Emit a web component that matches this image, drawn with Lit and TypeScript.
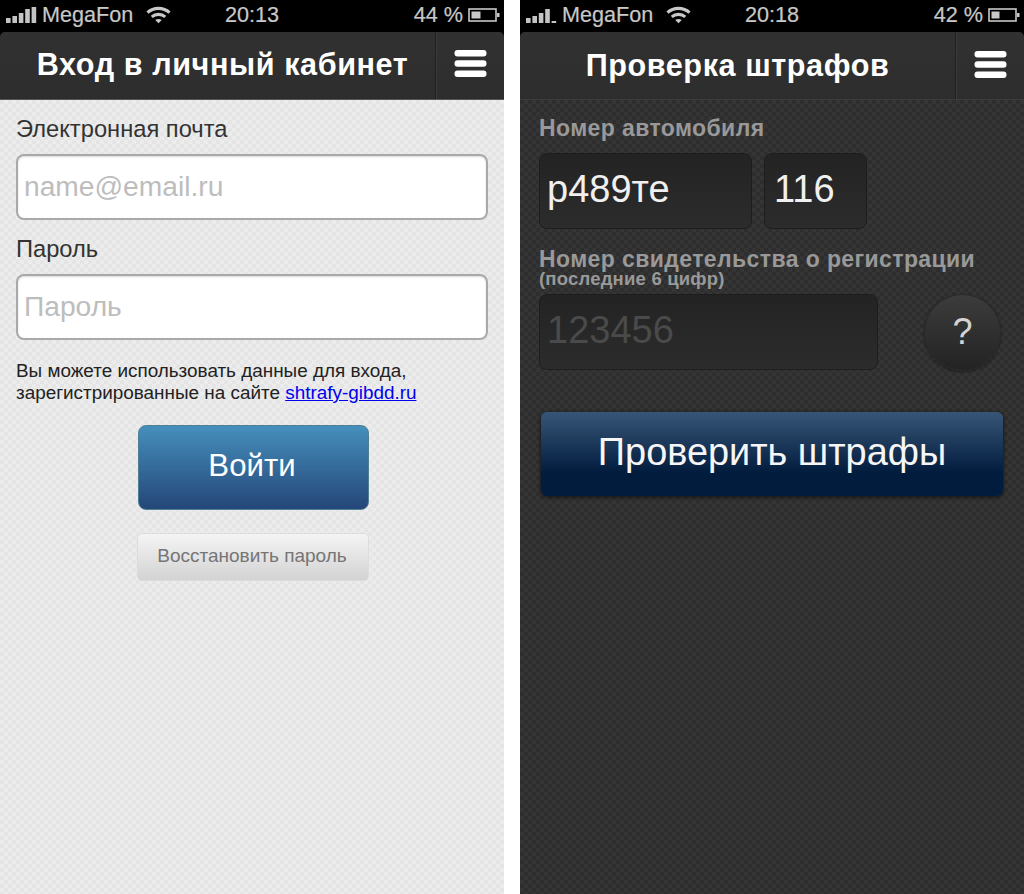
import { LitElement, html, css, svg } from "lit";
import { customElement } from "lit/decorators.js";

const signal = (bars: number[]) => html`<svg class="sig" width="31" height="18" viewBox="0 0 31 18">
  ${bars.map((h, i) => svg`<rect x="${i * 6.4}" y="${17 - h}" width="4.6" height="${h}" fill="#c4c4c4"/>`)}
</svg>`;

const wifi = html`<svg class="wifi" width="25" height="18" viewBox="0 0 26 18" fill="none" stroke="#c8c8c8" stroke-width="3.2">
  <path d="M1.5 6.5C8 .6 18 .6 24.5 6.5"/>
  <path d="M6 11C10 7.5 16 7.5 20 11"/>
  <path d="M13 17.5L9.6 14.2C11.6 12.7 14.4 12.7 16.4 14.2Z" fill="#c8c8c8" stroke="none"/>
</svg>`;

const battery = (fill: number) => html`<svg class="bat" width="33" height="16" viewBox="0 0 33 16">
  <rect x="1" y="2" width="27" height="12" fill="none" stroke="#c8c8c8" stroke-width="1.6"/>
  <rect x="3.5" y="4.5" width="${fill}" height="7" fill="#c8c8c8"/>
  <rect x="29" y="6" width="2.5" height="4" fill="#c8c8c8"/>
</svg>`;

const burger = html`<svg width="33" height="29" viewBox="0 0 33 29" fill="#fff">
  <rect x="0.5" y="1" width="32" height="6.5" rx="3"/>
  <rect x="0.5" y="11.2" width="32" height="6.5" rx="3"/>
  <rect x="0.5" y="21.4" width="32" height="6.5" rx="3"/>
</svg>`;

@customElement("app-root")
export class AppRoot extends LitElement {
  static styles = css`
    :host {
      display: flex;
      width: 1024px;
      height: 894px;
      overflow: hidden;
      background: #fff;
      font-family: "Liberation Sans", Arial, sans-serif;
    }
    .phone {
      width: 504px;
      height: 894px;
      flex: none;
      display: flex;
      flex-direction: column;
      background: #000;
    }
    .phone + .phone { margin-left: 16px; }
    .status {
      height: 32px;
      flex: none;
      display: flex;
      align-items: center;
      color: #c8c8c8;
      font-size: 21.6px;
      padding-bottom: 2px;
      box-sizing: border-box;
      -webkit-text-stroke: 0.2px #c8c8c8;
    }
    .sig { margin-left: 6px; margin-right: 5px; flex: none; }
    .carrier { width: 104px; flex: none; }
    .wifi { flex: none; }
    .clock { margin-left: 54px; width: 56px; flex: none; }
    .pct { margin-left: auto; margin-right: 5px; }
    .bat { margin-right: 3px; flex: none; }
    .nav {
      height: 68px;
      flex: none;
      border-radius: 5px 5px 0 0;
      background: linear-gradient(#313131, #2d2d2d);
      border-bottom: 1px solid #555;
      box-sizing: border-box;
      display: flex;
      align-items: stretch;
    }
    .nav.alt { border-bottom-color: #3c3c3c; }
    .title {
      flex: 1;
      display: flex;
      align-items: center;
      justify-content: center;
      color: #fff;
      font-weight: 700;
      font-size: 30.6px;
      letter-spacing: 0.58px;
      padding: 0 0 3px 10px;
      box-sizing: border-box;
    }
    .nav.alt .title { padding: 0 0 1px; }
    .menu {
      width: 69px;
      flex: none;
      border-left: 1px solid #1f1f1f;
      box-shadow: inset 1px 0 0 #3b3b3b;
      box-sizing: border-box;
      display: flex;
      align-items: center;
      justify-content: center;
      padding-bottom: 5px;
    }
    .nav.alt .menu { padding-bottom: 2px; }
    .content {
      flex: 1;
      box-sizing: border-box;
      display: flex;
      flex-direction: column;
    }
    .light {
      background-color: #e9e9e9;
      background-image: conic-gradient(#ececec 25%, #e5e5e5 0 50%, #ececec 0 75%, #e5e5e5 0);
      background-size: 8px 8px;
      padding: 16px 16px 0;
      color: #333;
    }
    .lbl {
      font-size: 23.7px;
      line-height: 26px;
      color: #333;
    }
    .field {
      height: 66px;
      box-sizing: border-box;
      margin-top: 12px;
      border: 2px solid #a9a9a9;
      border-radius: 8px;
      background: #fff;
      box-shadow: inset 0 1px 2px rgba(0, 0, 0, 0.15);
      color: #bdbdbd;
      font-size: 28.2px;
      display: flex;
      align-items: center;
      padding: 0 0 2px 6px;
    }
    .lbl.second { margin-top: 16px; }
    .note {
      margin-top: 20px;
      font-size: 18.9px;
      line-height: 22px;
      color: #222;
      white-space: nowrap;
    }
    .note a { color: #0000ee; text-decoration: underline; }
    .btn-login {
      margin: 21px 0 0 122px;
      width: 231px;
      height: 85px;
      box-sizing: border-box;
      border: 1px solid #4f7f93;
      border-radius: 8px;
      background: linear-gradient(#458fbc, #244678);
      color: #fff;
      font-size: 31.2px;
      display: flex;
      align-items: center;
      justify-content: center;
      padding: 0 3px 3px 0;
    }
    .btn-restore {
      margin: 23px 0 0 121px;
      width: 232px;
      height: 48px;
      box-sizing: border-box;
      border: 1px solid #dcdcdc;
      border-radius: 5px;
      background: linear-gradient(#f4f4f4, #d3d3d3);
      color: #757575;
      font-size: 19px;
      display: flex;
      align-items: center;
      justify-content: center;
      padding: 0 2px 2px 0;
    }
    .dark {
      background-color: #313131;
      background-image: conic-gradient(#353535 25%, #2e2e2e 0 50%, #353535 0 75%, #2e2e2e 0);
      background-size: 8px 8px;
      padding: 15px 0 0 19px;
    }
    .dlbl {
      font-weight: 700;
      font-size: 23px;
      line-height: 26px;
      letter-spacing: 0.4px;
      color: #999;
    }
    .dlbl.second { margin-top: 20px; line-height: 20px; }
    .dsub {
      font-weight: 700;
      font-size: 18.5px;
      line-height: 14px;
      margin-top: 3px;
      letter-spacing: 0.2px;
      color: #999;
    }
    .row { display: flex; gap: 12px; margin-top: 12px; }
    .dfield {
      height: 76px;
      box-sizing: border-box;
      border: 1px solid #1d1d1d;
      border-radius: 8px;
      background: linear-gradient(#232323, #2c2c2c);
      color: #f0f0f0;
      font-size: 38px;
      display: flex;
      align-items: center;
      padding: 0 0 4px 7px;
    }
    .plate { width: 213px; }
    .region { width: 103px; padding-left: 9px; }
    .row2 { display: flex; margin-top: 8px; }
    .doc { width: 339px; color: #4a4a4a; }
    .help {
      width: 77px;
      height: 77px;
      margin-left: 46px;
      flex: none;
      border-radius: 50%;
      box-sizing: border-box;
      background: linear-gradient(#3c3c3c, #232323);
      border: 1px solid #2a2a2a;
      box-shadow: 0 1px 3px rgba(0, 0, 0, 0.5);
      color: #d4d4d4;
      font-size: 36px;
      display: flex;
      align-items: center;
      justify-content: center;
      padding-bottom: 1px;
    }
    .btn-check {
      margin: 41px 0 0 2px;
      width: 462px;
      height: 84px;
      box-sizing: border-box;
      border-radius: 6px;
      background: linear-gradient(#375677, #021c3e 72%, #021c3e);
      box-shadow: 0 1px 4px rgba(0, 0, 0, 0.7);
      color: #f6f6f6;
      font-size: 37.9px;
      display: flex;
      align-items: center;
      justify-content: center;
      padding-bottom: 4px;
    }
  `;

  private statusBar(bars: number[], time: string, pct: string, fill: number) {
    return html`<div class="status">
      ${signal(bars)}
      <span class="carrier">MegaFon</span>
      ${wifi}
      <span class="clock">${time}</span>
      <span class="pct">${pct}</span>
      ${battery(fill)}
    </div>`;
  }

  private navBar(title: string, alt = false) {
    return html`<div class="nav ${alt ? "alt" : ""}">
      <div class="title">${title}</div>
      <div class="menu">${burger}</div>
    </div>`;
  }

  render() {
    return html`
      <section class="phone">
        ${this.statusBar([5, 7, 10, 14, 16], "20:13", "44 %", 9)}
        ${this.navBar("Вход в личный кабинет")}
        <div class="content light">
          <div class="lbl">Электронная почта</div>
          <div class="field">name@email.ru</div>
          <div class="lbl second">Пароль</div>
          <div class="field">Пароль</div>
          <div class="note">Вы можете использовать данные для входа,<br />зарегистрированные на сайте <a href="#">shtrafy-gibdd.ru</a></div>
          <div class="btn-login">Войти</div>
          <div class="btn-restore">Восстановить пароль</div>
        </div>
      </section>
      <section class="phone">
        ${this.statusBar([5, 7, 10, 14, 2], "20:18", "42 %", 8)}
        ${this.navBar("Проверка штрафов", true)}
        <div class="content dark">
          <div class="dlbl">Номер автомобиля</div>
          <div class="row">
            <div class="dfield plate">р489те</div>
            <div class="dfield region">116</div>
          </div>
          <div class="dlbl second">Номер свидетельства о регистрации</div>
          <div class="dsub">(последние 6 цифр)</div>
          <div class="row2">
            <div class="dfield doc">123456</div>
            <div class="help">?</div>
          </div>
          <div class="btn-check">Проверить штрафы</div>
        </div>
      </section>
    `;
  }
}
